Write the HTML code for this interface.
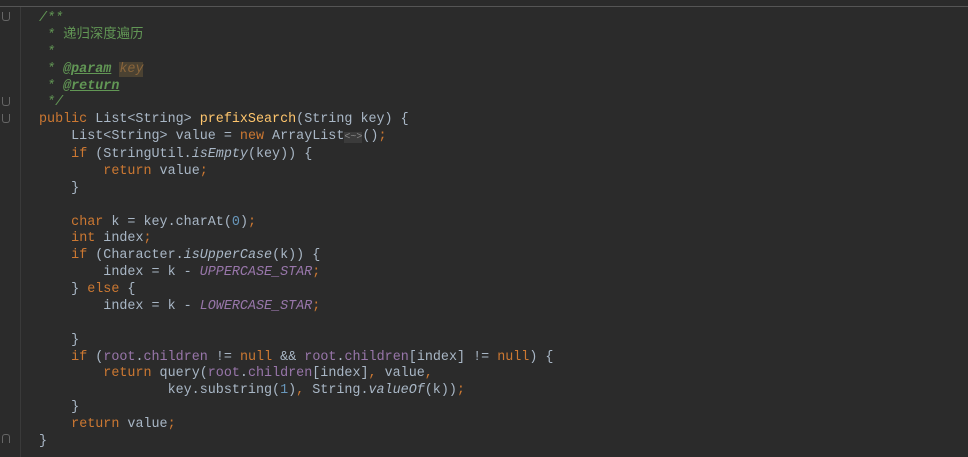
<html><head><style>
body{margin:0;width:968px;height:457px;background:#2b2b2b;overflow:hidden;position:relative}
.top{position:absolute;left:0;top:0;width:968px;height:6px;background:#2b2b2b;border-bottom:1px solid #555}
pre{position:absolute;left:39px;top:11px;margin:0;font-family:"Liberation Mono","Noto Sans CJK SC",monospace;font-size:13.4px;line-height:16.88px;color:#a9b7c6}
.k{color:#cc7832}.c{color:#629755;font-style:italic}.cc{color:#629755}.t{color:#629755;font-weight:bold;font-style:italic;text-decoration:underline}
.f{color:#9876aa}.n{color:#6897bb}.m{color:#ffc66d}.i{font-style:italic}.s{color:#9876aa;font-style:italic}
.h{background:#4b4232;color:#8a653b;font-style:italic}.g{background:#3b3b3b;color:#888;font-size:10px}
.gut{position:absolute;left:20px;top:7px;width:1px;height:450px;background:#3a3a3a}
.fm{position:absolute;left:2px;width:6px;height:8px;border:1px solid #666;border-radius:0 0 3px 3px;border-top:none}
</style></head><body>
<div class="top"></div>
<div class="gut"></div>
<div class="fm" style="top:12px"></div>
<div class="fm" style="top:97px"></div>
<div class="fm" style="top:114px"></div>
<div class="fm" style="top:434px;transform:scaleY(-1)"></div>
<pre><span class="c">/**</span>
<span class="c"> * </span><span class="cc">递归深度遍历</span>
<span class="c"> *</span>
<span class="c"> * </span><span class="t">@param</span> <span class="h">key</span>
<span class="c"> * </span><span class="t">@return</span>
<span class="c"> */</span>
<span class="k">public</span> List&lt;String&gt; <span class="m">prefixSearch</span>(String key) {
    List&lt;String&gt; value = <span class="k">new</span> ArrayList<span class="g">&lt;~&gt;</span>()<span class="k">;</span>
    <span class="k">if</span> (StringUtil.<span class="i">isEmpty</span>(key)) {
        <span class="k">return</span> value<span class="k">;</span>
    }

    <span class="k">char</span> k = key.charAt(<span class="n">0</span>)<span class="k">;</span>
    <span class="k">int</span> index<span class="k">;</span>
    <span class="k">if</span> (Character.<span class="i">isUpperCase</span>(k)) {
        index = k - <span class="s">UPPERCASE_STAR</span><span class="k">;</span>
    } <span class="k">else</span> {
        index = k - <span class="s">LOWERCASE_STAR</span><span class="k">;</span>

    }
    <span class="k">if</span> (<span class="f">root</span>.<span class="f">children</span> != <span class="k">null</span> &amp;&amp; <span class="f">root</span>.<span class="f">children</span>[index] != <span class="k">null</span>) {
        <span class="k">return</span> query(<span class="f">root</span>.<span class="f">children</span>[index]<span class="k">,</span> value<span class="k">,</span>
                key.substring(<span class="n">1</span>)<span class="k">,</span> String.<span class="i">valueOf</span>(k))<span class="k">;</span>
    }
    <span class="k">return</span> value<span class="k">;</span>
}</pre>
</body></html>
